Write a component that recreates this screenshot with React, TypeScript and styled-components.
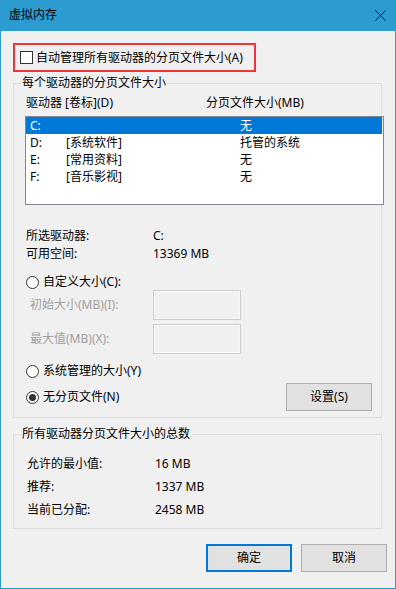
import styled, { createGlobalStyle } from "styled-components";

const GlobalStyle = createGlobalStyle`
  html, body {
    margin: 0;
    padding: 0;
    background: #ffffff;
  }
  body {
    font-family: "Noto Sans", "Noto Sans CJK SC", sans-serif;
    font-size: 12px;
    line-height: 16px;
    color: #000;
  }
  * {
    box-sizing: border-box;
  }
`;

const Window = styled.div`
  width: 396px;
  height: 589px;
  border: 1px solid #2b9bd0;
  border-top: none;
  background: #f0f0f0;
  display: flex;
  flex-direction: column;
`;

const TitleBar = styled.div`
  height: 31px;
  background: #2b9bd0;
  display: flex;
  align-items: center;
  justify-content: space-between;
  padding: 0 9px 1px 8px;
  font-size: 12px;
`;

const CloseButton = styled.div`
  width: 12px;
  height: 12px;
  display: flex;
  align-items: center;
  justify-content: center;
`;

const Body = styled.div`
  padding: 12px 0 0 12px;
  display: flex;
  flex-direction: column;
`;

const AutoBox = styled.label`
  width: 243px;
  height: 29px;
  border: 2px solid #ef343a;
  display: flex;
  align-items: center;
  padding-left: 5px;
  gap: 3px;
`;

const CheckBox = styled.span`
  width: 13px;
  height: 13px;
  border: 1px solid #333;
  background: #fff;
`;

const Group = styled.fieldset<{ $padTop: number; $padBottom: number; $top: number }>`
  margin: ${(p) => p.$top}px 0 0 0;
  width: 369px;
  min-width: 0;
  border: 1px solid #dcdcdc;
  padding: ${(p) => p.$padTop}px 9px ${(p) => p.$padBottom}px 12px;
  display: flex;
  flex-direction: column;
`;

const Legend = styled.legend`
  margin-left: -5px;
  padding: 0 1px;
  line-height: 16px;
`;

const ListHeader = styled.div`
  display: flex;
  height: 16px;
  span:first-child {
    width: 180px;
  }
`;

const ListBox = styled.div`
  margin: 5px 0 0 -1px;
  width: 359px;
  height: 89px;
  border: 1px solid #828790;
  background: #fff;
`;

const Row = styled.div<{ $selected?: boolean }>`
  height: 17px;
  display: flex;
  align-items: center;
  padding-left: 4px;
  margin-right: 1px;
  background: ${(p) => (p.$selected ? "#0078d7" : "transparent")};
  color: ${(p) => (p.$selected ? "#fff" : "#000")};
`;

const Cell = styled.span<{ $w?: number }>`
  width: ${(p) => (p.$w ? `${p.$w}px` : "auto")};
  flex: ${(p) => (p.$w ? "none" : "1")};
  white-space: nowrap;
`;

const Info = styled.div<{ $top: number }>`
  margin-top: ${(p) => p.$top}px;
  display: flex;
  flex-direction: column;
`;

const InfoRow = styled.div<{ $h: number; $indent?: number }>`
  height: ${(p) => p.$h}px;
  display: flex;
  align-items: center;
  padding-left: ${(p) => p.$indent ?? 0}px;
`;

const InfoLabel = styled.span<{ $w: number }>`
  width: ${(p) => p.$w}px;
  flex: none;
`;

const RadioRow = styled.label<{ $top: number }>`
  margin-top: ${(p) => p.$top}px;
  height: 16px;
  display: flex;
  align-items: center;
  gap: 4px;
`;

const Radio = styled.span<{ $checked?: boolean }>`
  width: 13px;
  height: 13px;
  border-radius: 50%;
  border: 1px solid #333;
  background: #fff;
  display: flex;
  align-items: center;
  justify-content: center;
  &::after {
    content: "";
    width: 7px;
    height: 7px;
    border-radius: 50%;
    background: ${(p) => (p.$checked ? "#333" : "transparent")};
  }
`;

const SizeRow = styled.div<{ $top: number }>`
  margin-top: ${(p) => p.$top}px;
  display: flex;
  align-items: center;
  padding-left: 4px;
`;

const DisabledLabel = styled.span`
  width: 123px;
  color: #a0a0a0;
`;

const SizeInput = styled.div`
  width: 88px;
  height: 30px;
  border: 1px solid #cccccc;
  box-shadow: inset 0 0 0 1px #f8f8f8;
  background: #f0f0f0;
`;

const ActionRow = styled.div`
  margin-top: 4px;
  height: 28px;
  display: flex;
  align-items: center;
  justify-content: space-between;
`;

const Button = styled.div<{ $default?: boolean }>`
  width: 86px;
  height: 28px;
  display: flex;
  align-items: center;
  justify-content: center;
  background: #e1e1e1;
  border: ${(p) => (p.$default ? "2px solid #0078d7" : "1px solid #adadad")};
`;

const Footer = styled.div`
  margin-top: 15px;
  display: flex;
  justify-content: flex-end;
  gap: 9px;
  padding-right: 9px;
  width: 383px;
`;

const drives = [
  { d: "C:", label: "", size: "无", selected: true },
  { d: "D:", label: "[系统软件]", size: "托管的系统" },
  { d: "E:", label: "[常用资料]", size: "无" },
  { d: "F:", label: "[音乐影视]", size: "无" },
];

export default function App() {
  return (
    <>
      <GlobalStyle />
      <Window>
        <TitleBar>
          <span>虚拟内存</span>
          <CloseButton>
            <svg width="11" height="11" viewBox="0 0 11 11">
              <path d="M0.5 0.5 L10.5 10.5 M10.5 0.5 L0.5 10.5" stroke="#000" strokeWidth="1" fill="none" />
            </svg>
          </CloseButton>
        </TitleBar>
        <Body>
          <AutoBox>
            <CheckBox />
            <span>自动管理所有驱动器的分页文件大小(A)</span>
          </AutoBox>

          <Group $top={3} $padTop={4} $padBottom={6}>
            <Legend>每个驱动器的分页文件大小</Legend>
            <ListHeader>
              <span>驱动器 [卷标](D)</span>
              <span>分页文件大小(MB)</span>
            </ListHeader>
            <ListBox>
              {drives.map((r) => (
                <Row key={r.d} $selected={r.selected}>
                  <Cell $w={36}>{r.d}</Cell>
                  <Cell $w={174}>{r.label}</Cell>
                  <Cell>{r.size}</Cell>
                </Row>
              ))}
            </ListBox>
            <Info $top={22}>
              <InfoRow $h={18}>
                <InfoLabel $w={127}>所选驱动器:</InfoLabel>
                <span>C:</span>
              </InfoRow>
              <InfoRow $h={18}>
                <InfoLabel $w={127}>可用空间:</InfoLabel>
                <span>13369 MB</span>
              </InfoRow>
            </Info>
            <RadioRow $top={11}>
              <Radio />
              <span>自定义大小(C):</span>
            </RadioRow>
            <SizeRow $top={0}>
              <DisabledLabel>初始大小(MB)(I):</DisabledLabel>
              <SizeInput />
            </SizeRow>
            <SizeRow $top={4}>
              <DisabledLabel>最大值(MB)(X):</DisabledLabel>
              <SizeInput />
            </SizeRow>
            <RadioRow $top={9}>
              <Radio />
              <span>系统管理的大小(Y)</span>
            </RadioRow>
            <ActionRow>
              <RadioRow $top={0}>
                <Radio $checked />
                <span>无分页文件(N)</span>
              </RadioRow>
              <Button>设置(S)</Button>
            </ActionRow>
          </Group>

          <Group $top={8} $padTop={10} $padBottom={7}>
            <Legend>所有驱动器分页文件大小的总数</Legend>
            <InfoRow $h={23} $indent={1}>
              <InfoLabel $w={128}>允许的最小值:</InfoLabel>
              <span>16 MB</span>
            </InfoRow>
            <InfoRow $h={23} $indent={1}>
              <InfoLabel $w={128}>推荐:</InfoLabel>
              <span>1337 MB</span>
            </InfoRow>
            <InfoRow $h={23} $indent={1}>
              <InfoLabel $w={128}>当前已分配:</InfoLabel>
              <span>2458 MB</span>
            </InfoRow>
          </Group>

          <Footer>
            <Button $default>确定</Button>
            <Button>取消</Button>
          </Footer>
        </Body>
      </Window>
    </>
  );
}
